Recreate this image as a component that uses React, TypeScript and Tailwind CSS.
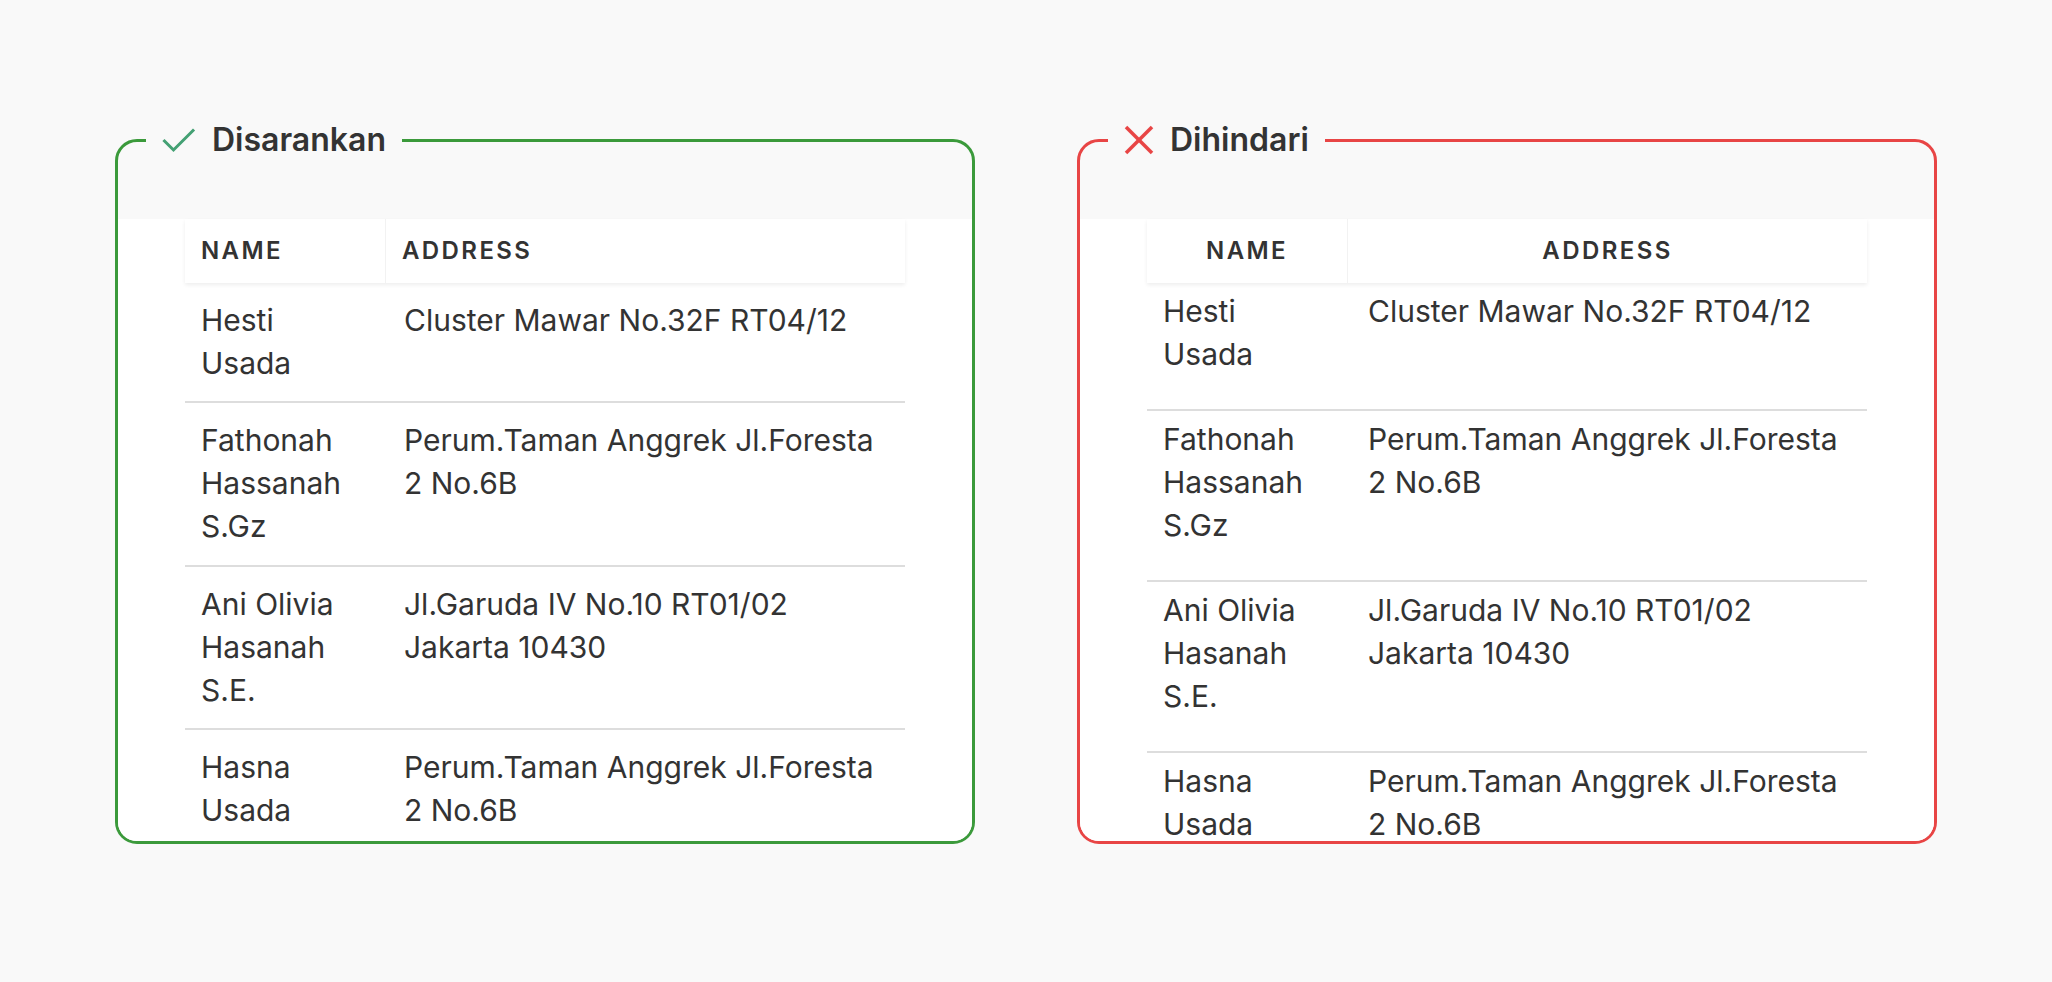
import type { ReactNode } from 'react';

type Row = { name: string[]; address: string[] };

const rows: Row[] = [
  { name: ['Hesti', 'Usada'], address: ['Cluster Mawar No.32F RT04/12'] },
  { name: ['Fathonah', 'Hassanah', 'S.Gz'], address: ['Perum.Taman Anggrek Jl.Foresta', '2 No.6B'] },
  { name: ['Ani Olivia', 'Hasanah', 'S.E.'], address: ['Jl.Garuda IV No.10 RT01/02', 'Jakarta 10430'] },
  { name: ['Hasna', 'Usada'], address: ['Perum.Taman Anggrek Jl.Foresta', '2 No.6B'] },
];

function CheckIcon() {
  return (
    <svg width="34" height="28" viewBox="0 0 34 28" fill="none">
      <polyline points="2.5,15 11.5,24 31,4.5" stroke="#44a174" strokeWidth="3" strokeLinecap="square" />
    </svg>
  );
}

function CrossIcon() {
  return (
    <svg width="30" height="30" viewBox="0 0 30 30" fill="none">
      <line x1="2" y1="2" x2="28" y2="28" stroke="#e84545" strokeWidth="3.5" />
      <line x1="28" y1="2" x2="2" y2="28" stroke="#e84545" strokeWidth="3.5" />
    </svg>
  );
}

function Lines({ items }: { items: string[] }) {
  return (
    <>
      {items.map((line) => (
        <div key={line} className="whitespace-nowrap">
          {line}
        </div>
      ))}
    </>
  );
}

interface PanelProps {
  good: boolean;
  title: string;
  icon: ReactNode;
}

function Panel({ good, title, icon }: PanelProps) {
  return (
    <div
      className={`relative h-[705px] w-[860px] shrink-0 rounded-[22px] border-[3px] ${
        good ? 'border-[#3b9a3b]' : 'border-[#e84545]'
      }`}
    >
      <div className="flex h-full flex-col overflow-hidden rounded-[19px]">
        <div className="h-[77px] shrink-0" />
        <div className="flex-1 bg-white px-[67px]">
          {/* header */}
          <div className="relative z-10 grid h-[64px] grid-cols-[201px_1fr] bg-white text-[24px] font-semibold tracking-[0.1em] text-[#333333] shadow-[0_2px_4px_rgba(0,0,0,0.07)]">
            <div
              className={`flex items-center border-r border-[#f2f2f2] px-4 ${good ? '' : 'justify-center'}`}
            >
              NAME
            </div>
            <div className={`flex items-center px-4 ${good ? '' : 'justify-center'}`}>ADDRESS</div>
          </div>
          {/* body */}
          {rows.map((row) => (
            <div
              key={row.name.join(' ')}
              className={`grid grid-cols-[201px_1fr] border-b-2 border-[#dddddd] text-[30px] leading-[43px] text-[#333333] ${
                good ? 'pt-[16px] pb-[16.5px]' : 'pt-[7px] pb-[33px]'
              }`}
            >
              <div className="px-4">
                <Lines items={row.name} />
              </div>
              <div className={good ? 'pl-[18px] pr-4' : 'pl-[20px] pr-4'}>
                <Lines items={row.address} />
              </div>
            </div>
          ))}
        </div>
      </div>
      <div className="absolute left-[28px] top-[-1.5px] flex -translate-y-1/2 items-center gap-4 bg-[#f9f9f9] px-4">
        {icon}
        <span className="text-[32px] font-semibold leading-[40px] text-[#333333]">{title}</span>
      </div>
    </div>
  );
}

export default function App() {
  return (
    <div className="flex min-h-screen items-center justify-center gap-[102px] bg-[#f9f9f9] font-['Inter',sans-serif]">
      <Panel good title="Disarankan" icon={<CheckIcon />} />
      <Panel good={false} title="Dihindari" icon={<CrossIcon />} />
    </div>
  );
}
